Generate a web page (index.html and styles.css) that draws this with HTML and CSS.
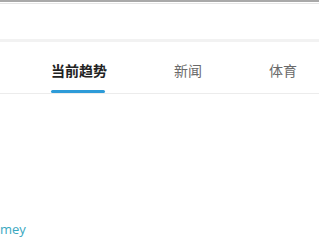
FILE: index.html
```html
<!DOCTYPE html>
<html>
<head>
<meta charset="utf-8">
<link rel="stylesheet" href="styles.css">
</head>
<body>
<div class="topbar"></div>
<div class="header"></div>
<nav class="tabs">
  <a class="tab active">当前趋势</a>
  <a class="tab">新闻</a>
  <a class="tab">体育</a>
</nav>
<div class="content">
  <a class="link">mey</a>
</div>
</body>
</html>
```
FILE: styles.css
```css
html, body {
  margin: 0;
  padding: 0;
  background: #fff;
  font-family: "Noto Sans CJK SC", "Liberation Sans", sans-serif;
  width: 319px;
  height: 240px;
  overflow: hidden;
}
.topbar {
  height: 2px;
  background: #a9a9a9;
  border-bottom: 1px solid #fff;
}
.header {
  height: 35px;
  border-top: 1px solid #e6e6e6;
  border-bottom: 3px solid #f2f2f2;
}
.tabs {
  display: flex;
  gap: 67px;
  padding-left: 51px;
  margin-top: 12px;
  border-bottom: 1px solid #ececec;
}
.tab {
  position: relative;
  font-size: 14px;
  line-height: 20px;
  padding: 6px 0 13px;
  color: #6a6a6a;
}
.tab.active {
  color: #222;
  font-weight: bold;
}
.tab.active::after {
  content: "";
  position: absolute;
  left: 0;
  right: 2px;
  bottom: 0;
  height: 3px;
  border-radius: 2px;
  background: #2d9bd8;
}
.content {
  padding-top: 126px;
}
.link {
  display: block;
  font-family: "Open Sans", "Liberation Sans", sans-serif;
  font-size: 13px;
  line-height: 18px;
  color: #3aa8bf;
}
```
